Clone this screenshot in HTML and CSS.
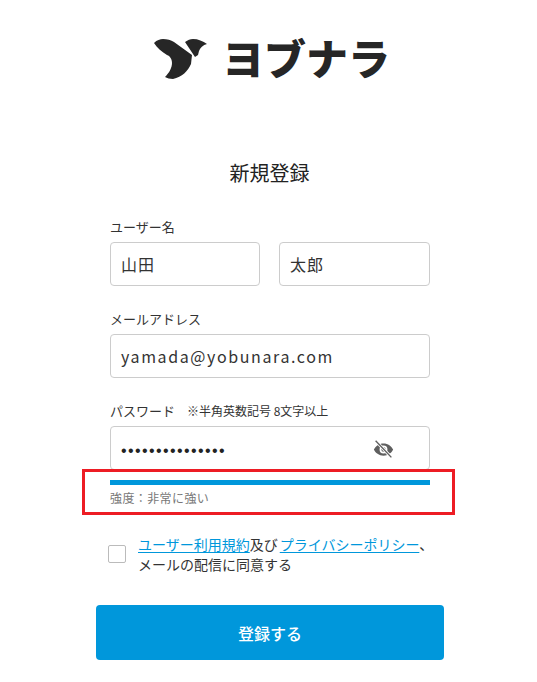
FILE: index.html
```html
<!doctype html>
<html lang="ja">
	<head>
		<meta charset="utf-8">
		<title>新規登録</title>
		<meta name="viewport" content="width=device-width, initial-scale=1.0">
		<link rel="stylesheet" href="styles.css">
	</head>
	<body>
	<div class="logo">
		<svg class="logo-mark" width="54" height="42" viewBox="0 0 54 42">
			<path fill="#262626" d="M0 5C3 2 6 1 9 1C13 1 17 2 20 4L38 17L37 26C34 33 28 39 19 41C16 41 13 40 11 39C15 35 18 30 18 25C18 21 16 18 13 17C8 14 3 10 0 5Z"/>
			<path fill="#262626" d="M31 4C34 2 36 1 39 1C44 1 49 3 53 6C49 7 46 10 45 13L44 17L41 19Z"/>
		</svg>
		<span class="logo-text">ヨブナラ</span>
	</div>

	<h1 class="title">新規登録</h1>

	<form class="form">
		<div class="field">
			<label class="label">ユーザー名</label>
			<div class="name-row">
				<div class="input">山田</div>
				<div class="input">太郎</div>
			</div>
		</div>
		<div class="field">
			<label class="label">メールアドレス</label>
			<div class="input mail">yamada@yobunara.com</div>
		</div>
		<div class="field pass">
			<label class="label">パスワード<small class="note">※半角英数記号 8文字以上</small></label>
			<div class="input secret">
				<span class="dots">•••••••••••••••</span>
				<svg class="eye" width="21" height="21" viewBox="0 0 24 24">
					<path fill="#5f5f5f" d="M12 5C7 5 2.700 8.100 1 12c1.700 3.900 6 7 11 7s9.300-3.100 11-7c-1.700-3.900-6-7-11-7Zm0 11.500a4.500 4.500 0 1 1 0-9 4.500 4.500 0 0 1 0 9Zm0-7a2.500 2.500 0 1 0 0 5 2.500 2.500 0 0 0 0-5Z"/>
					<path stroke="#fff" stroke-width="3.400" d="M3 2l18 19"/>
					<path stroke="#5f5f5f" stroke-width="1.600" d="M3 2l18 19"/>
				</svg>
			</div>
		</div>
		<div class="strength">
			<div class="bar"></div>
			<p class="strength-text">強度：非常に強い</p>
		</div>
		<div class="agree">
			<span class="check"></span>
			<p class="agree-text"><a href="#">ユーザー利用規約</a>及び<a class="policy" href="#">プライバシーポリシー</a>、<br>メールの配信に同意する</p>
		</div>
		<button class="submit" type="button">登録する</button>
	</form>
	</body>
</html>
```

FILE: styles.css
```css
*{margin: 0;padding: 0;box-sizing: border-box;}
a{color: #0097db;text-decoration: underline;text-underline-offset: 2px;}

body{
	font-family: "Noto Sans CJK JP", "Noto Sans", sans-serif;
	color: #262626;
	background: #fff;
	height: 682px;
	overflow: hidden;
}

.logo{
	display: flex;
	align-items: center;
	gap: 14px;
	height: 42px;
	margin-top: 38px;
	padding-left: 154px;
}
.logo-text{
	align-self: flex-start;
	font-size: 42px;
	font-weight: 900;
	line-height: 38px;
	color: #262626;
}

.title{
	margin-top: 77px;
	padding-left: 2px;
	font-size: 20px;
	font-weight: 400;
	line-height: 32px;
	text-align: center;
	color: #222;
}

.form{
	width: 320px;
	margin: 28px 0 0 110px;
}

.field{
	margin-bottom: 23px;
}
.field.pass{
	margin-bottom: -1px;
}
.label{
	display: block;
	height: 25px;
	font-size: 13px;
	line-height: 20px;
	color: #333;
}
.note{
	margin-left: 12px;
	font-size: 12px;
}

.name-row{
	display: grid;
	grid-template-columns: 150px 1fr;
	gap: 19px;
}
.name-row .input{
	letter-spacing: 1px;
}

.input{
	display: flex;
	align-items: center;
	justify-content: space-between;
	height: 44px;
	padding: 0 10px;
	border: 1px solid #ccc;
	border-radius: 4px;
	font-size: 16px;
	color: #333;
}
.mail{
	letter-spacing: 1.600px;
}
.secret{
	padding-right: 35px;
}
.dots{
	padding-top: 6px;
	font-family: "Liberation Sans", sans-serif;
	font-size: 16px;
	letter-spacing: 1.400px;
	color: #222;
}
.eye{
	margin-top: 2px;
}

.strength{
	width: 373px;
	height: 46px;
	margin: 0 0 0 -28px;
	padding: 8px 22px 0 25px;
	border: 3px solid #ed1c24;
}
.bar{
	height: 5px;
	background: #0097db;
}
.strength-text{
	margin-top: 4px;
	font-size: 12px;
	line-height: 18px;
	letter-spacing: 0.400px;
	color: #777;
}

.agree{
	display: flex;
	align-items: center;
	gap: 12px;
	margin: 19px 0 0 -2px;
}
.check{
	flex: none;
	width: 18px;
	height: 18px;
	border: 1px solid #bbb;
	border-radius: 2px;
}
.agree-text{
	font-size: 14px;
	line-height: 20px;
	white-space: nowrap;
	color: #333;
}
.policy{
	margin-left: 2px;
}

.submit{
	display: block;
	width: 348px;
	height: 55px;
	margin: 31px 0 0 -14px;
	border: 0;
	border-radius: 4px;
	background: #0097db;
	color: #fff;
	font-family: inherit;
	font-size: 16px;
	font-weight: 500;
}
```
